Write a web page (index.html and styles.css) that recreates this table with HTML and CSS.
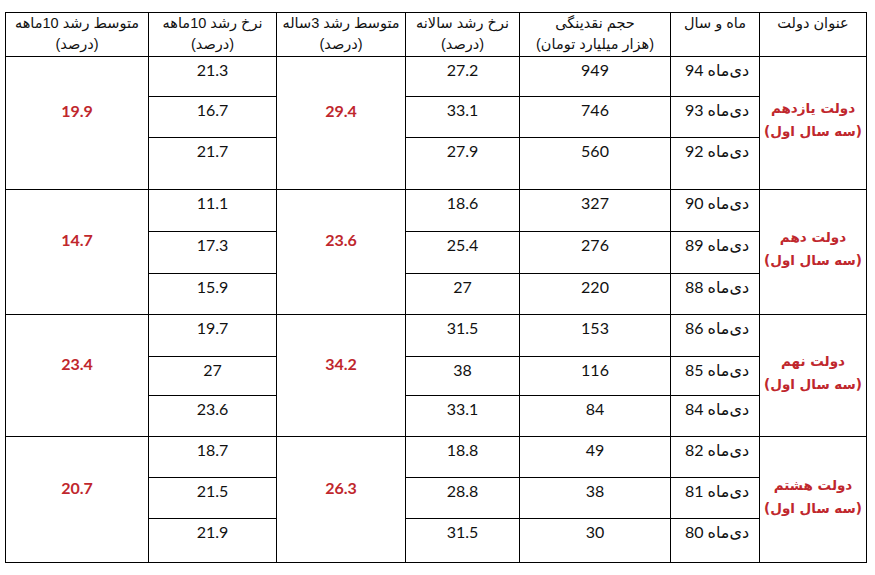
FILE: index.html
```html
<!DOCTYPE html>
<html lang="fa">
<head>
<meta charset="utf-8">
<title>جدول نقدینگی</title>
<link rel="stylesheet" href="styles.css">
</head>
<body>
<table class="grid" dir="rtl">
  <colgroup>
    <col class="c-gov"><col class="c-date"><col class="c-vol"><col class="c-rate"><col class="c-avg3"><col class="c-rate10"><col class="c-avg10">
  </colgroup>
  <thead>
    <tr class="head">
      <th>عنوان دولت</th>
      <th>ماه و سال</th>
      <th>حجم نقدینگی<br>(هزار میلیارد تومان)</th>
      <th>نرخ رشد سالانه<br>(درصد)</th>
      <th>متوسط رشد 3ساله<br>(درصد)</th>
      <th>نرخ رشد 10ماهه<br>(درصد)</th>
      <th>متوسط رشد 10ماهه<br>(درصد)</th>
    </tr>
  </thead>
  <tbody>
    <tr class="r40">
      <td rowspan="3" class="gov">دولت یازدهم<br>(سه سال اول)</td>
      <td class="date">دی‌ماه 94</td><td>949</td><td>27.2</td>
      <td rowspan="3" class="avg">29.4</td>
      <td>21.3</td>
      <td rowspan="3" class="avg">19.9</td>
    </tr>
    <tr class="r41"><td class="date">دی‌ماه 93</td><td>746</td><td>33.1</td><td>16.7</td></tr>
    <tr class="r52"><td class="date">دی‌ماه 92</td><td>560</td><td>27.9</td><td>21.7</td></tr>

    <tr class="r42">
      <td rowspan="3" class="gov">دولت دهم<br>(سه سال اول)</td>
      <td class="date">دی‌ماه 90</td><td>327</td><td>18.6</td>
      <td rowspan="3" class="avg">23.6</td>
      <td>11.1</td>
      <td rowspan="3" class="avg">14.7</td>
    </tr>
    <tr class="r42"><td class="date">دی‌ماه 89</td><td>276</td><td>25.4</td><td>17.3</td></tr>
    <tr class="r41"><td class="date">دی‌ماه 88</td><td>220</td><td>27</td><td>15.9</td></tr>

    <tr class="r42">
      <td rowspan="3" class="gov">دولت نهم<br>(سه سال اول)</td>
      <td class="date">دی‌ماه 86</td><td>153</td><td>31.5</td>
      <td rowspan="3" class="avg">34.2</td>
      <td>19.7</td>
      <td rowspan="3" class="avg">23.4</td>
    </tr>
    <tr class="r39"><td class="date">دی‌ماه 85</td><td>116</td><td>38</td><td>27</td></tr>
    <tr class="r41"><td class="date">دی‌ماه 84</td><td>84</td><td>33.1</td><td>23.6</td></tr>

    <tr class="r41">
      <td rowspan="3" class="gov">دولت هشتم<br>(سه سال اول)</td>
      <td class="date">دی‌ماه 82</td><td>49</td><td>18.8</td>
      <td rowspan="3" class="avg">26.3</td>
      <td>18.7</td>
      <td rowspan="3" class="avg">20.7</td>
    </tr>
    <tr class="r41"><td class="date">دی‌ماه 81</td><td>38</td><td>28.8</td><td>21.5</td></tr>
    <tr class="r44"><td class="date">دی‌ماه 80</td><td>30</td><td>31.5</td><td>21.9</td></tr>
  </tbody>
</table>
</body>
</html>
```

FILE: styles.css
```css
html, body {
  margin: 0;
  background: #fff;
}
body {
  padding: 12px 0 0 5px;
}
.grid {
  border-collapse: collapse;
  table-layout: fixed;
  width: 861px;
  font-family: "Lato", "DejaVu Sans", sans-serif;
  color: #111;
}
.c-gov { width: 107px; }
.c-date { width: 89px; }
.c-vol { width: 151px; }
.c-rate { width: 114px; }
.c-avg3 { width: 129px; }
.c-rate10 { width: 128px; }
.c-avg10 { width: 143px; }

.grid th, .grid td {
  border: 1px solid #000;
  padding: 0;
  text-align: center;
  box-sizing: border-box;
}
.grid th {
  font-family: "Liberation Sans", "DejaVu Sans", sans-serif;
  font-weight: normal;
  font-size: 14.5px;
  line-height: 21px;
  vertical-align: top;
  padding-top: 0;
}
.head { height: 44px; }
.grid td {
  font-size: 16px;
  line-height: 20px;
  vertical-align: top;
  padding-top: 3px;
}
.grid td.date {
  font-size: 16px;
  padding-left: 4px;
}
.grid td.gov {
  vertical-align: middle;
  color: #c0272d;
  font-family: "DejaVu Sans", sans-serif;
  font-weight: bold;
  font-size: 13.5px;
  line-height: 23px;
  padding: 0 4px 6px;
}
.grid td.avg {
  vertical-align: middle;
  color: #c0272d;
  font-weight: bold;
  font-size: 16px;
  padding: 0 0 24px;
}
.r39 { height: 39px; }
.r40 { height: 40px; }
.r41 { height: 41px; }
.r42 { height: 42px; }
.r44 { height: 44px; }
.r52 { height: 52px; }
```
